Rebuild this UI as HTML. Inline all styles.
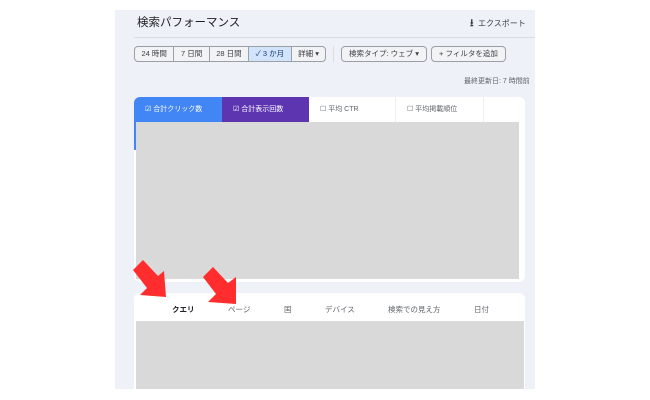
<!DOCTYPE html>
<html><head><meta charset="utf-8"><style>
*{margin:0;padding:0;box-sizing:border-box}
body{width:650px;height:400px;background:#fff;position:relative;overflow:hidden;font-family:"Liberation Sans","Noto Sans CJK JP",sans-serif;color:#3c4043}
.panel{position:absolute;left:115px;top:10px;width:420px;height:379px;background:#eef2f8}
.abs{position:absolute}
.title{left:137px;top:14px;font-size:11.5px;color:#202124}
.exp{left:470px;top:16px;font-size:8px;color:#3c4043}
.hr{left:134px;top:37px;width:401px;height:1px;background:#dadce0}
.btns{left:134px;top:46px;height:16px;display:flex;border:1px solid #9aa0a6;border-radius:4px;font-size:7.5px;overflow:hidden;background:#f1f3f4}
.btns div{padding:0 6.5px;line-height:14px;border-right:1px solid #9aa0a6}
.btns div:last-child{border-right:none}
.btn{height:16px;border:1px solid #9aa0a6;border-radius:4px;font-size:7.5px;line-height:14px;padding:0 7px;background:#f1f3f4}
.card{background:#fff;border-radius:6px}
.grey{background:#d9d9d9}
.tab{top:97px;height:25px;font-size:7px;line-height:25px;padding-left:11px}
.t2{font-size:7.5px;color:#5f6368;top:304px}
</style></head><body>
<div class="panel"></div>
<div class="abs title">検索パフォーマンス</div>
<div class="abs exp"><b style="font-size:10px">⭳</b>&nbsp; エクスポート</div>
<div class="abs hr"></div>
<div class="abs btns"><div>24 時間</div><div>7 日間</div><div>28 日間</div><div style="background:#d2e3fc;color:#1a3d7a">✓ 3 か月</div><div>詳細 ▾</div></div>
<div class="abs" style="left:333px;top:46px;width:1px;height:16px;background:#dadce0"></div>
<div class="abs btn" style="left:341px;top:46px">検索タイプ: ウェブ ▾</div>
<div class="abs btn" style="left:431px;top:46px">+ フィルタを追加</div>
<div class="abs" style="left:464px;top:76px;font-size:7px;color:#5f6368">最終更新日: 7 時間前</div>
<div class="abs card" style="left:134px;top:97px;width:391px;height:185px"></div>
<div class="abs tab" style="left:134px;width:88px;background:#4285f4;color:#fff;border-radius:6px 0 0 0">☑ 合計クリック数</div>
<div class="abs tab" style="left:222px;width:87px;background:#5e35b1;color:#fff">☑ 合計表示回数</div>
<div class="abs tab" style="left:309px;width:87px;color:#5f6368;border-right:1px solid #eee">☐ 平均 CTR</div>
<div class="abs tab" style="left:396px;width:88px;color:#5f6368;border-right:1px solid #eee">☐ 平均掲載順位</div>
<div class="abs" style="left:134px;top:122px;width:2px;height:28px;background:#4285f4"></div>
<div class="abs grey" style="left:136px;top:122px;width:383px;height:157px"></div>
<div class="abs card" style="left:134px;top:293px;width:391px;height:96px;border-radius:6px 6px 0 0"></div>
<div class="abs t2" style="left:172px;color:#202124;font-weight:bold">クエリ</div>
<div class="abs t2" style="left:228px">ページ</div>
<div class="abs t2" style="left:284px">国</div>
<div class="abs t2" style="left:325px">デバイス</div>
<div class="abs t2" style="left:388px">検索での見え方</div>
<div class="abs t2" style="left:474px">日付</div>
<div class="abs grey" style="left:136px;top:321px;width:388px;height:68px"></div>
<svg class="abs" style="left:130px;top:255px" width="120" height="50">
<polygon fill="#ff2d2d" points="3,15 13,5 28,21 34,16 36,42 10,40 17,33"/>
<polygon fill="#ff2d2d" points="73,22 83,12 98,28 106,22 106,49 78,47 86,39"/>
</svg>
</body></html>
